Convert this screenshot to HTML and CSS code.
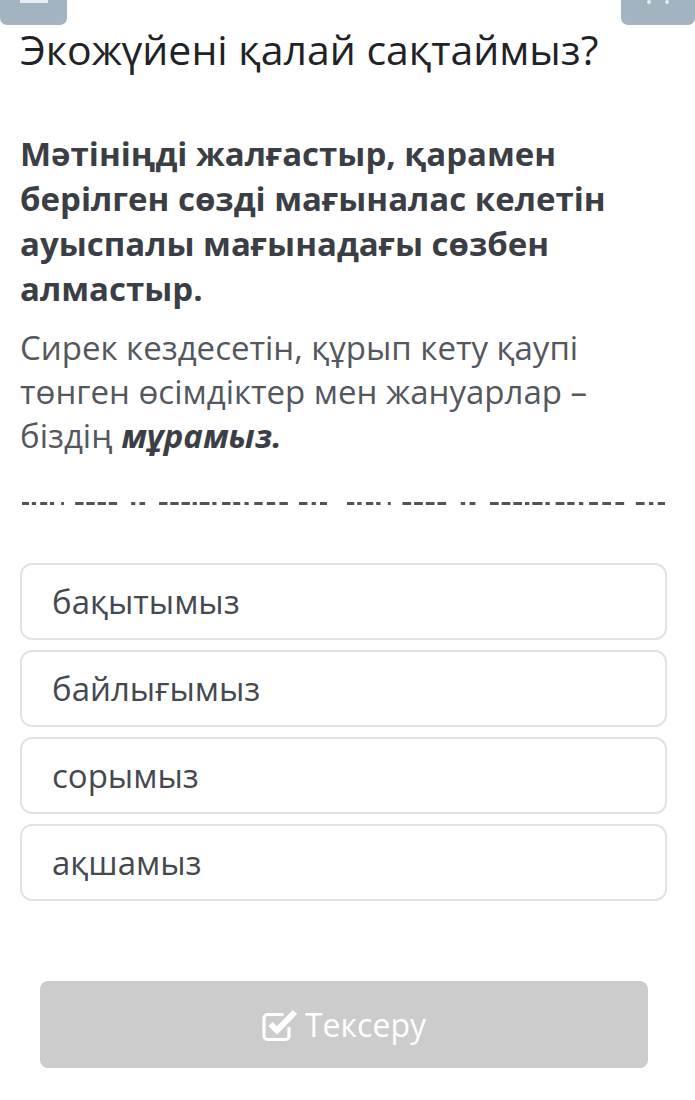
FILE: index.html
```html
<!DOCTYPE html>
<html lang="kk">

<head>
    <meta charset="UTF-8">
    <meta name="viewport" content="width=device-width, initial-scale=1.0">
    <link rel="stylesheet" href="styles.css">
    <title>Экожүйені қалай сақтаймыз?</title>
</head>

<body>
    <div class="topbar">
        <div class="tab left"><span class="bar"></span></div>
        <div class="tab right"><span class="dot"></span><span class="dot"></span></div>
    </div>

    <h1 class="title">Экожүйені қалай сақтаймыз?</h1>

    <p class="task">Мәтініңді жалғастыр, қарамен берілген сөзді мағыналас келетін ауыспалы мағынадағы сөзбен алмастыр.</p>

    <p class="text">Сирек кездесетін, құрып кету қаупі төнген өсімдіктер мен жануарлар – біздің <b><i>мұрамыз.</i></b></p>

    <div class="blank">
        <svg class="dashes first" viewBox="0 0 218 3" preserveAspectRatio="none">
            <g fill="#505458">
                <rect x="0" y="0" width="5" height="3"/><rect x="7" y="0" width="3" height="3"/>
                <rect x="13" y="0" width="5" height="3"/><rect x="20" y="0" width="3" height="3"/>
                <rect x="28" y="0" width="2" height="3"/>
                <rect x="38" y="0" width="6" height="3"/><rect x="46" y="0" width="6" height="3"/>
                <rect x="54" y="0" width="6" height="3"/><rect x="62" y="0" width="6" height="3"/>
                <rect x="78" y="0" width="3" height="3"/><rect x="84" y="0" width="4" height="3"/>
                <rect x="98" y="0" width="6" height="3"/><rect x="106" y="0" width="6" height="3"/>
                <rect x="114" y="0" width="6" height="3"/><rect x="122" y="0" width="3" height="3"/>
                <rect x="127" y="0" width="7" height="3"/><rect x="136" y="0" width="3" height="3"/>
                <rect x="143" y="0" width="6" height="3"/><rect x="151" y="0" width="5" height="3"/>
                <rect x="159" y="0" width="3" height="3"/><rect x="166" y="0" width="6" height="3"/>
                <rect x="175" y="0" width="6" height="3"/><rect x="184" y="0" width="6" height="3"/>
                <rect x="198" y="0" width="6" height="3"/><rect x="207" y="0" width="3" height="3"/>
                <rect x="213" y="0" width="5" height="3"/>
            </g>
        </svg>
        <svg class="dashes second" viewBox="0 0 218 3" preserveAspectRatio="none">
            <g fill="#505458">
                <rect x="0" y="0" width="5" height="3"/><rect x="7" y="0" width="3" height="3"/>
                <rect x="13" y="0" width="5" height="3"/><rect x="20" y="0" width="3" height="3"/>
                <rect x="28" y="0" width="2" height="3"/>
                <rect x="38" y="0" width="6" height="3"/><rect x="46" y="0" width="6" height="3"/>
                <rect x="54" y="0" width="6" height="3"/><rect x="62" y="0" width="6" height="3"/>
                <rect x="78" y="0" width="3" height="3"/><rect x="84" y="0" width="4" height="3"/>
                <rect x="98" y="0" width="6" height="3"/><rect x="106" y="0" width="6" height="3"/>
                <rect x="114" y="0" width="6" height="3"/><rect x="122" y="0" width="3" height="3"/>
                <rect x="127" y="0" width="7" height="3"/><rect x="136" y="0" width="3" height="3"/>
                <rect x="143" y="0" width="6" height="3"/><rect x="151" y="0" width="5" height="3"/>
                <rect x="159" y="0" width="3" height="3"/><rect x="166" y="0" width="6" height="3"/>
                <rect x="175" y="0" width="6" height="3"/><rect x="184" y="0" width="6" height="3"/>
                <rect x="198" y="0" width="6" height="3"/><rect x="207" y="0" width="3" height="3"/>
                <rect x="213" y="0" width="5" height="3"/>
            </g>
        </svg>
    </div>

    <div class="options">
        <div class="option">бақытымыз</div>
        <div class="option">байлығымыз</div>
        <div class="option">сорымыз</div>
        <div class="option">ақшамыз</div>
    </div>

    <div class="actions">
        <button class="check" disabled>
            <svg class="icon" width="36" height="34" viewBox="0 0 36 34">
                <path d="M27 19 v9 a3.5 3.5 0 0 1 -3.5 3.5 H5.5 a3.5 3.5 0 0 1 -3.5 -3.5 V10 a3.5 3.5 0 0 1 3.5 -3.5 h16" fill="none" stroke="#fff" stroke-width="3.2"/>
                <path d="M8.5 16 l6.5 6.5 L33 4" fill="none" stroke="#fff" stroke-width="6" stroke-linejoin="miter"/>
            </svg>
            Тексеру
        </button>
    </div>
</body>

</html>
```

FILE: styles.css
```css
* {
    margin: 0;
    padding: 0;
    box-sizing: border-box;
}

body {
    background: #ffffff;
    font-family: "Open Sans", "Noto Sans", sans-serif;
    padding: 0 28px 0 20px;
}

.topbar {
    display: flex;
    justify-content: space-between;
    margin: 0 -28px 0 -20px;
    height: 25px;
}

.tab {
    background-color: #a3b4c1;
    height: 25px;
    border-bottom-left-radius: 7px;
    border-bottom-right-radius: 7px;
    display: flex;
    justify-content: center;
    gap: 14px;
}

.tab.left {
    width: 67px;
}

.tab.right {
    width: 74px;
}

.bar {
    width: 28px;
    height: 3px;
    background: #e6ecf0;
}

.dot {
    width: 4px;
    height: 4px;
    border-radius: 2px;
    background: #e6ecf0;
}

.title {
    font-size: 41px;
    font-weight: 400;
    color: #1f2226;
    line-height: 48px;
}

.task {
    margin-top: 58px;
    font-size: 33px;
    font-weight: 700;
    line-height: 45px;
    color: #3b3f45;
}

.text {
    margin-top: 15px;
    font-size: 33px;
    line-height: 44px;
    color: #54585e;
}

.text b {
    color: #3b3f45;
}

.blank {
    display: flex;
    margin-top: 44px;
    height: 3px;
    padding-left: 2px;
}

.dashes {
    display: block;
    height: 3px;
}

.dashes.first {
    width: 305px;
}

.dashes.second {
    width: 318px;
    margin-left: 20px;
}

.options {
    margin-top: 58px;
    display: flex;
    flex-direction: column;
    gap: 10px;
}

.option {
    height: 77px;
    border: 2px solid #e2e2e2;
    border-radius: 12px;
    padding-left: 30px;
    display: flex;
    align-items: center;
    font-size: 33px;
    color: #45494f;
}

.actions {
    margin-top: 80px;
    padding: 0 0 0 20px;
}

.check {
    width: 608px;
    height: 87px;
    border: none;
    border-radius: 8px;
    background-color: #cccccc;
    color: #ffffff;
    font-family: "Open Sans", "Noto Sans", sans-serif;
    font-size: 32px;
    display: flex;
    align-items: center;
    justify-content: center;
    gap: 7px;
}
```
